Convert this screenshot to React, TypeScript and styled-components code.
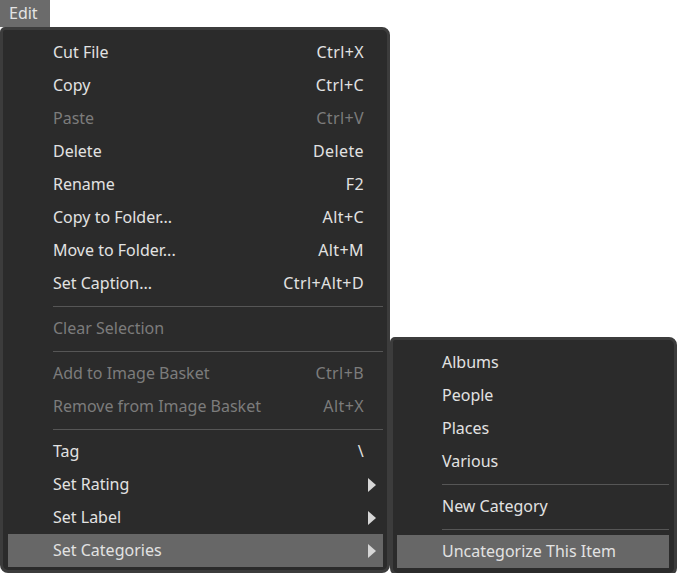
import React from "react";
import styled, { createGlobalStyle } from "styled-components";

const Global = createGlobalStyle`
  html, body { margin: 0; padding: 0; background: #ffffff; }
  body { font-family: "Noto Sans", "Open Sans", sans-serif; }
`;

const Page = styled.div`
  position: relative;
  width: 677px;
  height: 573px;
  overflow: hidden;
`;

const MenuBarButton = styled.div`
  width: 50px;
  height: 27px;
  box-sizing: border-box;
  padding-left: 9px;
  padding-bottom: 1px;
  background: #6b6b6b;
  color: #e4e4e4;
  font-size: 16px;
  line-height: 26px;
`;

const Menu = styled.div<{ $width: number }>`
  width: ${(p) => p.$width}px;
  box-sizing: border-box;
  background: #2b2b2b;
  border: 3px solid #3c3c3c;
  border-radius: 5px 8px 8px 8px;
  padding: 6px 4px 3px 5px;
  display: flex;
  flex-direction: column;
`;

const SubMenu = styled(Menu)`
  position: absolute;
  left: 390px;
  top: 337px;
  padding: 6px 5px 5px 4px;
`;

const Row = styled.div<{ $disabled?: boolean; $active?: boolean }>`
  height: 33px;
  box-sizing: border-box;
  padding-bottom: 1px;
  display: flex;
  align-items: center;
  padding-left: 45px;
  font-size: 16px;
  color: ${(p) => (p.$disabled ? "#7c7c7c" : "#e2e2e2")};
  background: ${(p) => (p.$active ? "#676767" : "transparent")};
`;

const Label = styled.span`
  flex: 1;
  white-space: nowrap;
`;

const Shortcut = styled.span`
  white-space: nowrap;
  letter-spacing: 0.4px;
`;

const Trail = styled.span`
  width: 19px;
  height: 100%;
  display: flex;
  align-items: center;
  justify-content: flex-start;
  padding-left: 4px;
  padding-top: 1px;
  box-sizing: border-box;
`;

const Arrow = styled.span`
  width: 0;
  height: 0;
  border-top: 7px solid transparent;
  border-bottom: 7px solid transparent;
  border-left: 8px solid #d6d6d6;
`;

const Separator = styled.div`
  height: 12px;
  margin-left: 45px;
  display: flex;
  align-items: center;
  &::after {
    content: "";
    flex: 1;
    height: 1px;
    background: #565656;
  }
`;

type Item =
  | { sep: true }
  | { label: string; shortcut?: string; disabled?: boolean; sub?: boolean; active?: boolean };

const mainItems: Item[] = [
  { label: "Cut File", shortcut: "Ctrl+X" },
  { label: "Copy", shortcut: "Ctrl+C" },
  { label: "Paste", shortcut: "Ctrl+V", disabled: true },
  { label: "Delete", shortcut: "Delete" },
  { label: "Rename", shortcut: "F2" },
  { label: "Copy to Folder...", shortcut: "Alt+C" },
  { label: "Move to Folder...", shortcut: "Alt+M" },
  { label: "Set Caption...", shortcut: "Ctrl+Alt+D" },
  { sep: true },
  { label: "Clear Selection", disabled: true },
  { sep: true },
  { label: "Add to Image Basket", shortcut: "Ctrl+B", disabled: true },
  { label: "Remove from Image Basket", shortcut: "Alt+X", disabled: true },
  { sep: true },
  { label: "Tag", shortcut: "\\" },
  { label: "Set Rating", sub: true },
  { label: "Set Label", sub: true },
  { label: "Set Categories", sub: true, active: true },
];

const subItems: Item[] = [
  { label: "Albums" },
  { label: "People" },
  { label: "Places" },
  { label: "Various" },
  { sep: true },
  { label: "New Category" },
  { sep: true },
  { label: "Uncategorize This Item", active: true },
];

function renderItems(items: Item[], trail: boolean) {
  return items.map((it, i) =>
    "sep" in it ? (
      <Separator key={i} />
    ) : (
      <Row key={i} $disabled={it.disabled} $active={it.active}>
        <Label>{it.label}</Label>
        {it.shortcut && <Shortcut>{it.shortcut}</Shortcut>}
        {trail && <Trail>{it.sub && <Arrow />}</Trail>}
      </Row>
    )
  );
}

export default function App() {
  return (
    <Page>
      <Global />
      <MenuBarButton>Edit</MenuBarButton>
      <Menu $width={390}>{renderItems(mainItems, true)}</Menu>
      <SubMenu $width={287}>{renderItems(subItems, false)}</SubMenu>
    </Page>
  );
}
